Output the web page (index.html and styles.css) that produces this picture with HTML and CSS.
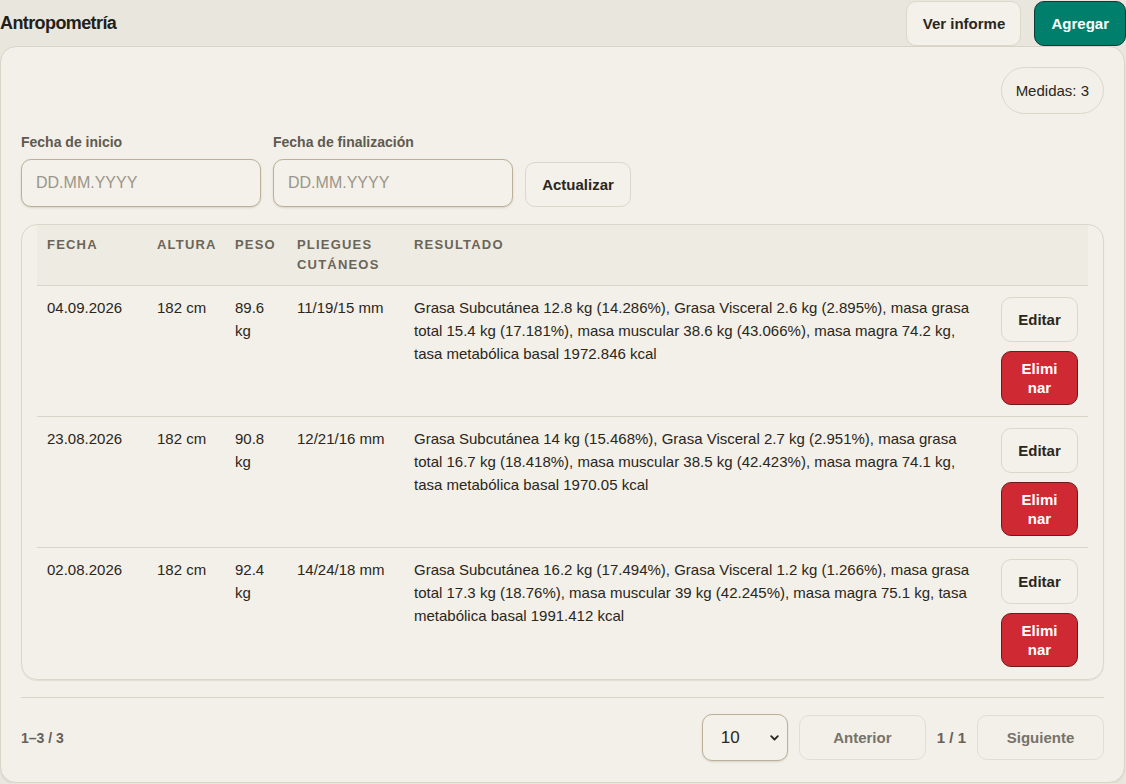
FILE: index.html
```html
<!DOCTYPE html>
<html lang="es">
<head>
  <meta charset="UTF-8">
  <meta name="viewport" content="width=device-width, initial-scale=1.0">
  <title>Antropometría</title>
  <link rel="stylesheet" href="styles.css">
</head>
<body>
  <div class="page-header">
    <h1 class="page-title">Antropometría</h1>
    <div class="header-actions">
      <button class="btn">Ver informe</button>
      <button class="btn btn-primary">Agregar</button>
    </div>
  </div>

  <div class="card">
    <div class="card-top">
      <span class="badge">Medidas: 3</span>
    </div>

    <div class="filters">
      <label class="field">
        <span class="field-label">Fecha de inicio</span>
        <input class="date-input" type="text" placeholder="DD.MM.YYYY">
      </label>
      <label class="field">
        <span class="field-label">Fecha de finalización</span>
        <input class="date-input" type="text" placeholder="DD.MM.YYYY">
      </label>
      <button class="btn btn-refresh">Actualizar</button>
    </div>

    <div class="table-wrap">
      <table class="data-table">
        <colgroup>
          <col style="width:110px">
          <col style="width:78px">
          <col style="width:62px">
          <col style="width:117px">
          <col>
          <col style="width:97px">
        </colgroup>
        <thead>
          <tr>
            <th>Fecha</th>
            <th>Altura</th>
            <th>Peso</th>
            <th>Pliegues cutáneos</th>
            <th>Resultado</th>
            <th></th>
          </tr>
        </thead>
        <tbody>
          <tr>
            <td>04.09.2026</td>
            <td>182 cm</td>
            <td>89.6 kg</td>
            <td>11/19/15 mm</td>
            <td>Grasa Subcutánea 12.8 kg (14.286%), Grasa Visceral 2.6 kg (2.895%), masa grasa total 15.4 kg (17.181%), masa muscular 38.6 kg (43.066%), masa magra 74.2 kg, tasa metabólica basal 1972.846 kcal</td>
            <td class="actions">
              <button class="btn btn-edit">Editar</button>
              <button class="btn btn-danger">Eliminar</button>
            </td>
          </tr>
          <tr>
            <td>23.08.2026</td>
            <td>182 cm</td>
            <td>90.8 kg</td>
            <td>12/21/16 mm</td>
            <td>Grasa Subcutánea 14 kg (15.468%), Grasa Visceral 2.7 kg (2.951%), masa grasa total 16.7 kg (18.418%), masa muscular 38.5 kg (42.423%), masa magra 74.1 kg, tasa metabólica basal 1970.05 kcal</td>
            <td class="actions">
              <button class="btn btn-edit">Editar</button>
              <button class="btn btn-danger">Eliminar</button>
            </td>
          </tr>
          <tr>
            <td>02.08.2026</td>
            <td>182 cm</td>
            <td>92.4 kg</td>
            <td>14/24/18 mm</td>
            <td>Grasa Subcutánea 16.2 kg (17.494%), Grasa Visceral 1.2 kg (1.266%), masa grasa total 17.3 kg (18.76%), masa muscular 39 kg (42.245%), masa magra 75.1 kg, tasa metabólica basal 1991.412 kcal</td>
            <td class="actions">
              <button class="btn btn-edit">Editar</button>
              <button class="btn btn-danger">Eliminar</button>
            </td>
          </tr>
        </tbody>
      </table>
    </div>

    <div class="pager">
      <span class="pager-count">1–3 / 3</span>
      <div class="pager-controls">
        <div class="select-wrap">
          <select class="page-size">
            <option>10</option>
            <option>25</option>
            <option>50</option>
          </select>
          <svg class="select-chevron" width="9" height="6" viewBox="0 0 9 6">
            <path d="M1.2 1.2 L4.5 4.5 L7.8 1.2" fill="none" stroke="#2a2620" stroke-width="1.8" stroke-linecap="round" stroke-linejoin="round"/>
          </svg>
        </div>
        <button class="btn btn-page" disabled>Anterior</button>
        <span class="pager-pos">1 / 1</span>
        <button class="btn btn-page" disabled>Siguiente</button>
      </div>
    </div>
  </div>
</body>
</html>
```

FILE: styles.css
```css
body {
  margin: 0;
  width: 1126px;
  font-family: "Liberation Sans", Arial, sans-serif;
  background: #e9e6de;
  color: #2a2620;
}

/* Header */
.page-header {
  display: flex;
  justify-content: space-between;
  align-items: center;
  height: 46px;
}

.page-title {
  margin: 0;
  font-size: 18px;
  font-weight: bold;
  letter-spacing: -0.6px;
  color: #221f1a;
}

.header-actions {
  display: flex;
  gap: 13px;
  align-self: flex-start;
  padding-top: 1px;
}

.btn {
  font-family: inherit;
  font-size: 15px;
  font-weight: bold;
  color: #2a2620;
  background: #f3f1e9;
  border: 1px solid #dcd7ca;
  border-radius: 10px;
  cursor: pointer;
  box-sizing: border-box;
  white-space: nowrap;
}

.header-actions .btn {
  height: 45px;
  padding: 0 16px;
}

.header-actions .btn:first-child {
  width: 115px;
  padding: 0;
}

.btn-primary {
  background: #007f6d;
  border-color: #0d3b34;
  color: #fff;
}

/* Card */
.card {
  width: 1125px;
  box-sizing: border-box;
  background: #f2f0e8;
  border: 1px solid #d9d4c7;
  border-radius: 16px;
  padding: 20px 20px 21px;
  box-shadow: 0 2px 1px rgba(0, 0, 0, 0.05);
}

.card-top {
  display: flex;
  justify-content: flex-end;
}

.badge {
  display: inline-block;
  height: 47px;
  line-height: 45px;
  box-sizing: border-box;
  padding: 0 14px;
  border: 1px solid #dcd7ca;
  border-radius: 24px;
  font-size: 15px;
  color: #2a2620;
}

/* Filters */
.filters {
  display: flex;
  align-items: flex-end;
  gap: 12px;
  margin-top: 20px;
}

.field {
  display: flex;
  flex-direction: column;
}

.field-label {
  font-size: 14px;
  line-height: 17px;
  font-weight: bold;
  color: #5f5a50;
  margin-bottom: 8px;
}

.date-input {
  width: 240px;
  height: 48px;
  box-sizing: border-box;
  padding: 0 14px;
  font-family: inherit;
  font-size: 16px;
  color: #2a2620;
  background: #f3f1e9;
  border: 1px solid #bcb09a;
  border-radius: 10px;
  box-shadow: 0 1px 2px rgba(60, 50, 30, 0.15);
}

.date-input::placeholder {
  color: #9b968c;
}

.btn-refresh {
  height: 45px;
  width: 106px;
}

/* Table */
.table-wrap {
  margin-top: 17px;
  border: 1px solid #dcd7ca;
  border-radius: 16px;
  padding: 0 15px 1px;
  box-shadow: 0 1px 1px rgba(0, 0, 0, 0.08);
}

.data-table {
  width: 100%;
  table-layout: fixed;
  border-collapse: collapse;
}

.data-table th {
  text-align: left;
  vertical-align: top;
  padding: 10px;
  font-size: 13px;
  line-height: 20px;
  font-weight: bold;
  letter-spacing: 1.2px;
  text-transform: uppercase;
  color: #6b6558;
  background: #eeebe3;
  border-bottom: 1px solid #d9d4c7;
}

.data-table td {
  vertical-align: top;
  padding: 10px;
  font-size: 15px;
  line-height: 23px;
  color: #2a2620;
  border-bottom: 1px solid #d9d4c7;
}

.data-table tbody tr:last-child td {
  border-bottom: none;
}

.data-table td.actions {
  padding: 11px 10px 11px 10px;
}

.btn-edit {
  display: block;
  width: 77px;
  height: 45px;
}

.btn-danger {
  display: block;
  width: 77px;
  margin-top: 9px;
  padding: 7px 18px;
  font-size: 15px;
  line-height: 19px;
  word-break: break-all;
  white-space: normal;
  background: #cf2a33;
  border-color: #6b1b1d;
  color: #fff;
}

/* Pager */
.pager {
  display: flex;
  justify-content: space-between;
  align-items: center;
  margin-top: 17px;
  padding-top: 16px;
  border-top: 1px solid #d9d4c7;
}

.pager-count {
  font-size: 14px;
  font-weight: bold;
  color: #66615a;
}

.pager-controls {
  display: flex;
  align-items: center;
  gap: 11px;
}

.select-wrap {
  position: relative;
}

.page-size {
  appearance: none;
  -webkit-appearance: none;
  width: 86px;
  height: 47px;
  padding: 0 18px;
  font-family: inherit;
  font-size: 17px;
  color: #2a2620;
  background: #f3f1e9;
  border: 1px solid #bcb09a;
  border-radius: 10px;
  box-shadow: 0 1px 2px rgba(60, 50, 30, 0.15);
}

.select-chevron {
  position: absolute;
  right: 9px;
  top: 21px;
  pointer-events: none;
}

.btn-page {
  width: 127px;
  height: 45px;
  color: #77726a;
  background: #f2f0e8;
  border-color: #e2ded3;
  cursor: default;
}

.pager-pos {
  font-size: 15px;
  font-weight: bold;
  color: #66615a;
}
```
